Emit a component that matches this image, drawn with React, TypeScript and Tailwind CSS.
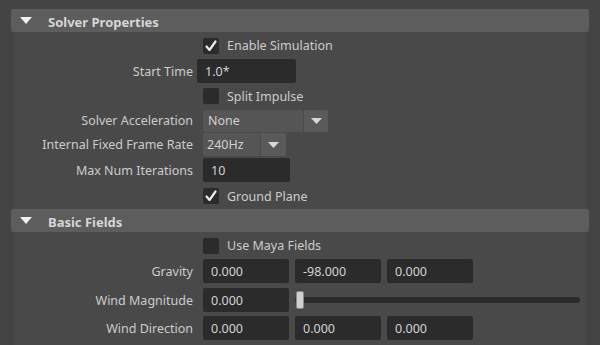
import React from "react";

const font = { fontFamily: '"Noto Sans", "Open Sans", sans-serif' };

function Check({ on }: { on?: boolean }) {
  return (
    <div className="w-[16px] h-[16px] bg-[#2b2b2b] rounded-[2px] flex items-center justify-center shrink-0">
      {on && (
        <svg width="14" height="14" viewBox="0 0 14 14">
          <path d="M2.5 7.5 L5.5 11 L11.5 2.5" fill="none" stroke="#ececec" strokeWidth="2.2" strokeLinecap="round" strokeLinejoin="round" />
        </svg>
      )}
    </div>
  );
}

function Header({ title }: { title: string }) {
  return (
    <div className="h-[23px] mx-[11px] bg-[#5d5d5d] rounded-[2px] flex items-center">
      <svg width="12" height="7" viewBox="0 0 12 7" className="ml-[9px]">
        <path d="M0 0 L12 0 L6 7 Z" fill="#f0f0f0" />
      </svg>
      <span className="ml-[16px] pt-[4px] text-[13px] font-bold text-[#d6d6d6]">{title}</span>
    </div>
  );
}

function Label({ text }: { text: string }) {
  return (
    <div className="w-[179px] pt-[2px] text-right text-[12.5px] text-[#cccccc] shrink-0">{text}</div>
  );
}

function Field({ value, w = "w-[86px]", h = "h-[24px]" }: { value: string; w?: string; h?: string }) {
  return (
    <div className={`${w} ${h} bg-[#2b2b2b] rounded-[2px] flex items-center pl-[8px] pt-[2px] text-[12.5px] text-[#d2d2d2] shrink-0`}>
      {value}
    </div>
  );
}

function Arrow() {
  return (
    <svg width="11" height="6" viewBox="0 0 11 6">
      <path d="M0 0 L11 0 L5.5 6 Z" fill="#d8d8d8" />
    </svg>
  );
}

function CheckRow({ on, text, h }: { on?: boolean; text: string; h: string }) {
  return (
    <div className={`${h} flex items-center`}>
      <div className="w-[189px]" />
      <Check on={on} />
      <span className="ml-[8px] pt-[2px] text-[12.5px] text-[#cccccc]">{text}</span>
    </div>
  );
}

export default function App() {
  return (
    <div style={font} className="w-[600px] h-[345px] bg-[#444444] pt-[9px] overflow-hidden select-none">
      <Header title="Solver Properties" />
      <div className="mx-[14px] bg-[#494949]">
        <CheckRow on text="Enable Simulation" h="h-[27px]" />
        <div className="h-[24px] flex items-center">
          <Label text="Start Time" />
          <div className="ml-[4px]">
            <Field value="1.0*" w="w-[99px]" />
          </div>
        </div>
        <CheckRow text="Split Impulse" h="h-[26px]" />
        <div className="h-[23px] flex items-center">
          <Label text="Solver Acceleration" />
          <div className="ml-[10px] flex h-[22px] rounded-[2px] overflow-hidden">
            <div className="w-[100px] bg-[#555555] flex items-center pl-[5px] pt-[2px] text-[12.5px] text-[#d2d2d2]">None</div>
            <div className="w-[24px] ml-[1px] bg-[#5a5a5a] flex items-center justify-center"><Arrow /></div>
          </div>
        </div>
        <div className="h-[25px] flex items-center">
          <Label text="Internal Fixed Frame Rate" />
          <div className="ml-[10px] flex h-[23px] rounded-[2px] overflow-hidden">
            <div className="w-[57px] bg-[#555555] flex items-center pl-[4px] pt-[2px] text-[12.5px] text-[#d2d2d2]">240Hz</div>
            <div className="w-[25px] ml-[1px] bg-[#5a5a5a] flex items-center justify-center"><Arrow /></div>
          </div>
        </div>
        <div className="h-[26px] flex items-center">
          <Label text="Max Num Iterations" />
          <div className="ml-[10px]">
            <Field value="10" w="w-[87px]" />
          </div>
        </div>
        <CheckRow on text="Ground Plane" h="h-[26px]" />
      </div>
      <Header title="Basic Fields" />
      <div className="mx-[14px] bg-[#494949] h-[120px]">
        <CheckRow text="Use Maya Fields" h="h-[27px]" />
        <div className="h-[24px] flex items-center">
          <Label text="Gravity" />
          <div className="ml-[10px] flex gap-[6px]">
            <Field value="0.000" />
            <Field value="-98.000" />
            <Field value="0.000" />
          </div>
        </div>
        <div className="h-[24px] mt-[5px] flex items-center">
          <Label text="Wind Magnitude" />
          <div className="ml-[10px] flex items-center">
            <Field value="0.000" />
            <div className="relative ml-[6px] w-[285px] h-[6px] bg-[#2b2b2b] rounded-[3px]">
              <div className="absolute left-[1px] top-[-6px] w-[8px] h-[18px] bg-[#cfcfcf] border border-[#8a8a8a] rounded-[2px]" />
            </div>
          </div>
        </div>
        <div className="h-[24px] mt-[4px] flex items-center">
          <Label text="Wind Direction" />
          <div className="ml-[10px] flex gap-[6px]">
            <Field value="0.000" />
            <Field value="0.000" />
            <Field value="0.000" />
          </div>
        </div>
      </div>
    </div>
  );
}
